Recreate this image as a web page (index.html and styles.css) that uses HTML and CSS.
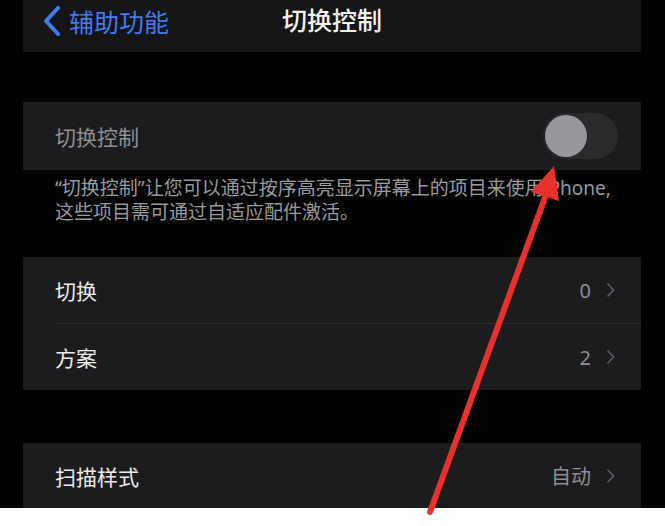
FILE: index.html
```html
<!DOCTYPE html>
<html lang="zh-CN">
<head>
  <meta charset="UTF-8" />
  <meta name="viewport" content="width=device-width, initial-scale=1.0"/>
  <title>切换控制</title>
  <link rel="stylesheet" href="styles.css">
</head>
<body>
  <div class="screen">
    <div class="nav">
      <div class="back">
        <svg class="back-icon" width="20" height="30" viewBox="0 0 20 30">
          <path d="M16 2 L4 15 L16 28" fill="none" stroke="#3f7cf0" stroke-width="4" stroke-linecap="round" stroke-linejoin="round"/>
        </svg>
        <span>辅助功能</span>
      </div>
      <div class="title">切换控制</div>
    </div>

    <div class="gap"></div>

    <div class="row toggle-row">
      <span class="label dim">切换控制</span>
      <div class="switch"><div class="knob"></div></div>
    </div>

    <div class="footer">
      “切换控制”让您可以通过按序高亮显示屏幕上的项目来使用iPhone,<br>
      这些项目需可通过自适应配件激活。
    </div>

    <div class="group">
      <div class="row">
        <span class="label">切换</span>
        <span class="value">0 <svg class="chev" width="9" height="16" viewBox="0 0 9 16"><path d="M1.5 1.5 L7.5 8 L1.5 14.5" fill="none" stroke="#5c5c61" stroke-width="1.6"/></svg></span>
      </div>
      <div class="sep"></div>
      <div class="row">
        <span class="label">方案</span>
        <span class="value">2 <svg class="chev" width="9" height="16" viewBox="0 0 9 16"><path d="M1.5 1.5 L7.5 8 L1.5 14.5" fill="none" stroke="#5c5c61" stroke-width="1.6"/></svg></span>
      </div>
    </div>

    <div class="gap gap-lg"></div>

    <div class="row last-row">
      <span class="label">扫描样式</span>
      <span class="value">自动 <svg class="chev" width="9" height="16" viewBox="0 0 9 16"><path d="M1.5 1.5 L7.5 8 L1.5 14.5" fill="none" stroke="#5c5c61" stroke-width="1.6"/></svg></span>
    </div>
  </div>

  <div class="caption"></div>

  <svg class="arrow" width="665" height="526" viewBox="0 0 665 526">
    <line x1="430" y1="512" x2="547" y2="192" stroke="#e8302c" stroke-width="6" stroke-linecap="round"/>
    <polygon points="554,166 531,192 559,201" fill="#e8302c"/>
  </svg>
</body>
</html>
```

FILE: styles.css
```css
body {
  margin: 0;
  width: 665px;
  height: 526px;
  background: #fff;
  font-family: "Noto Sans", "Noto Sans CJK SC", sans-serif;
  overflow: hidden;
  position: relative;
}

.screen {
  background: #000;
  padding: 0 24px 0 23px;
  height: 508px;
  display: flex;
  flex-direction: column;
}

.nav {
  height: 52px;
  background: #151516;
  position: relative;
  display: flex;
  align-items: center;
}

.back {
  display: flex;
  align-items: center;
  color: #3f7cf0;
  font-size: 25px;
  padding-left: 19px;
  gap: 7px;
  margin-top: -10px;
}

.title {
  position: absolute;
  left: 0;
  right: 0;
  top: 0;
  text-align: center;
  color: #f2f2f2;
  font-size: 25px;
  font-weight: 500;
  line-height: 40px;
}

.gap {
  height: 50px;
}

.gap-lg {
  height: 53px;
}

.row {
  background: #1c1c1e;
  height: 66px;
  display: flex;
  align-items: center;
  justify-content: space-between;
  padding: 0 26px 0 32px;
}

.toggle-row {
  height: 68px;
  padding-right: 23px;
}

.last-row {
  height: 65px;
}

.label {
  color: #ececec;
  font-size: 21px;
}

.label.dim {
  color: #8f8f94;
}

.value {
  color: #8d8d92;
  font-size: 20px;
  display: flex;
  align-items: center;
  gap: 15px;
}

.switch {
  width: 75px;
  height: 46px;
  border-radius: 23px;
  background: #2a2a2d;
  position: relative;
}

.knob {
  width: 42px;
  height: 42px;
  border-radius: 50%;
  background: #98979d;
  margin: 2px;
}

.footer {
  height: 81px;
  padding: 6px 0 0 32px;
  color: #9a9a9f;
  font-size: 19px;
  line-height: 24px;
}

.group {
  background: #1c1c1e;
}

.sep {
  height: 1px;
  margin-left: 32px;
  background: #2c2c2f;
}

.caption {
  height: 18px;
  background: #fff;
}

.arrow {
  position: absolute;
  left: 0;
  top: 0;
}
```
